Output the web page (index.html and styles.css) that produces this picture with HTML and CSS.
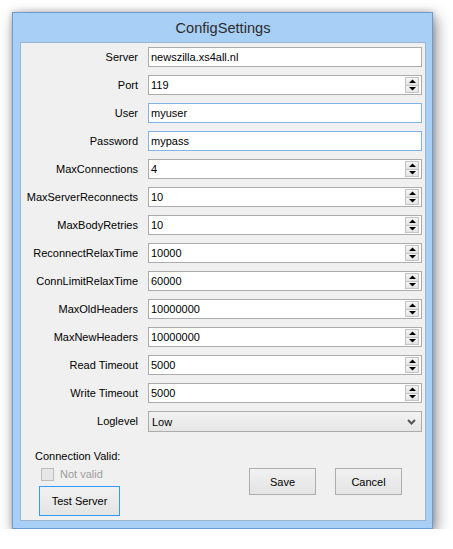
FILE: index.html
```html
<!DOCTYPE html>
<html>
<head>
<meta charset="utf-8">
<link rel="stylesheet" href="styles.css">
</head>
<body>
<div class="window">
  <div class="titlebar">ConfigSettings</div>
  <div class="client">
    <div class="form">
      <label class="lbl">Server</label>
      <div class="field"><span class="val">newszilla.xs4all.nl</span></div>

      <label class="lbl">Port</label>
      <div class="field spin"><span class="val">119</span><span class="spinner"><span class="sb up"><svg width="7" height="5" viewBox="0 0 7 5"><path d="M3.5 0.5 L7 4 L0 4 Z" fill="#000"/></svg></span><span class="sb down"><svg width="7" height="5" viewBox="0 0 7 5"><path d="M0 1 L7 1 L3.5 4.5 Z" fill="#000"/></svg></span></span></div>

      <label class="lbl">User</label>
      <div class="field focus"><span class="val">myuser</span></div>

      <label class="lbl">Password</label>
      <div class="field focus"><span class="val">mypass</span></div>

      <label class="lbl">MaxConnections</label>
      <div class="field spin"><span class="val">4</span><span class="spinner"><span class="sb up"><svg width="7" height="5" viewBox="0 0 7 5"><path d="M3.5 0.5 L7 4 L0 4 Z" fill="#000"/></svg></span><span class="sb down"><svg width="7" height="5" viewBox="0 0 7 5"><path d="M0 1 L7 1 L3.5 4.5 Z" fill="#000"/></svg></span></span></div>

      <label class="lbl">MaxServerReconnects</label>
      <div class="field spin"><span class="val">10</span><span class="spinner"><span class="sb up"><svg width="7" height="5" viewBox="0 0 7 5"><path d="M3.5 0.5 L7 4 L0 4 Z" fill="#000"/></svg></span><span class="sb down"><svg width="7" height="5" viewBox="0 0 7 5"><path d="M0 1 L7 1 L3.5 4.5 Z" fill="#000"/></svg></span></span></div>

      <label class="lbl">MaxBodyRetries</label>
      <div class="field spin"><span class="val">10</span><span class="spinner"><span class="sb up"><svg width="7" height="5" viewBox="0 0 7 5"><path d="M3.5 0.5 L7 4 L0 4 Z" fill="#000"/></svg></span><span class="sb down"><svg width="7" height="5" viewBox="0 0 7 5"><path d="M0 1 L7 1 L3.5 4.5 Z" fill="#000"/></svg></span></span></div>

      <label class="lbl">ReconnectRelaxTime</label>
      <div class="field spin"><span class="val">10000</span><span class="spinner"><span class="sb up"><svg width="7" height="5" viewBox="0 0 7 5"><path d="M3.5 0.5 L7 4 L0 4 Z" fill="#000"/></svg></span><span class="sb down"><svg width="7" height="5" viewBox="0 0 7 5"><path d="M0 1 L7 1 L3.5 4.5 Z" fill="#000"/></svg></span></span></div>

      <label class="lbl">ConnLimitRelaxTime</label>
      <div class="field spin"><span class="val">60000</span><span class="spinner"><span class="sb up"><svg width="7" height="5" viewBox="0 0 7 5"><path d="M3.5 0.5 L7 4 L0 4 Z" fill="#000"/></svg></span><span class="sb down"><svg width="7" height="5" viewBox="0 0 7 5"><path d="M0 1 L7 1 L3.5 4.5 Z" fill="#000"/></svg></span></span></div>

      <label class="lbl">MaxOldHeaders</label>
      <div class="field spin"><span class="val">10000000</span><span class="spinner"><span class="sb up"><svg width="7" height="5" viewBox="0 0 7 5"><path d="M3.5 0.5 L7 4 L0 4 Z" fill="#000"/></svg></span><span class="sb down"><svg width="7" height="5" viewBox="0 0 7 5"><path d="M0 1 L7 1 L3.5 4.5 Z" fill="#000"/></svg></span></span></div>

      <label class="lbl">MaxNewHeaders</label>
      <div class="field spin"><span class="val">10000000</span><span class="spinner"><span class="sb up"><svg width="7" height="5" viewBox="0 0 7 5"><path d="M3.5 0.5 L7 4 L0 4 Z" fill="#000"/></svg></span><span class="sb down"><svg width="7" height="5" viewBox="0 0 7 5"><path d="M0 1 L7 1 L3.5 4.5 Z" fill="#000"/></svg></span></span></div>

      <label class="lbl">Read Timeout</label>
      <div class="field spin"><span class="val">5000</span><span class="spinner"><span class="sb up"><svg width="7" height="5" viewBox="0 0 7 5"><path d="M3.5 0.5 L7 4 L0 4 Z" fill="#000"/></svg></span><span class="sb down"><svg width="7" height="5" viewBox="0 0 7 5"><path d="M0 1 L7 1 L3.5 4.5 Z" fill="#000"/></svg></span></span></div>

      <label class="lbl">Write Timeout</label>
      <div class="field spin"><span class="val">5000</span><span class="spinner"><span class="sb up"><svg width="7" height="5" viewBox="0 0 7 5"><path d="M3.5 0.5 L7 4 L0 4 Z" fill="#000"/></svg></span><span class="sb down"><svg width="7" height="5" viewBox="0 0 7 5"><path d="M0 1 L7 1 L3.5 4.5 Z" fill="#000"/></svg></span></span></div>

      <label class="lbl">Loglevel</label>
      <div class="combo"><span class="val">Low</span><svg class="chev" width="9" height="6" viewBox="0 0 9 6"><path d="M1 1 L4.5 4.5 L8 1" fill="none" stroke="#555" stroke-width="2"/></svg></div>
    </div>

    <div class="bottom">
      <div class="status">
        <div class="status-label">Connection Valid:</div>
        <div class="check-row"><span class="checkbox"></span><span class="check-text">Not valid</span></div>
        <button class="btn default">Test Server</button>
      </div>
      <div class="actions">
        <button class="btn">Save</button>
        <button class="btn">Cancel</button>
      </div>
    </div>
  </div>
</div>
</body>
</html>
```

FILE: styles.css
```css
html, body {
  margin: 0;
  padding: 0;
  background: #ffffff;
}
body {
  font-family: "Liberation Sans", Arial, sans-serif;
  font-size: 11px;
  color: #000;
  padding: 12px 0 0 12px;
}
.window {
  box-sizing: border-box;
  width: 421px;
  height: 517px;
  border: 1px solid #6f9ad0;
  background: #a8cff6;
  box-shadow: 3px 5px 14px rgba(0, 0, 0, 0.45), 0 0 6px rgba(0, 0, 0, 0.2);
  display: flex;
  flex-direction: column;
  padding: 0 6px 7px 7px;
}
.titlebar {
  height: 29px;
  line-height: 30px;
  text-align: center;
  font-size: 14.6px;
  color: #2b2b2b;
}
.client {
  flex: 1;
  border: 1px solid #9db4cf;
  background: #f0f0f0;
  display: flex;
  flex-direction: column;
  padding: 4px 3px 4px 0;
}
.form {
  display: grid;
  grid-template-columns: 117px 274px;
  column-gap: 10px;
  row-gap: 8px;
  grid-auto-rows: 20px;
}
.lbl {
  text-align: right;
  line-height: 20px;
  white-space: nowrap;
  color: #000;
}
.field {
  height: 20px;
  box-sizing: border-box;
  border: 1px solid #acacac;
  background: #fff;
  display: flex;
  align-items: center;
  position: relative;
}
.field.focus {
  border-color: #7eb4ea;
}
.val {
  padding-left: 2px;
  line-height: 18px;
}
.spinner {
  position: absolute;
  right: 2px;
  top: 1px;
  width: 14px;
  height: 16px;
  display: flex;
  flex-direction: column;
}
.sb {
  flex: 1;
  box-sizing: border-box;
  border: 1px solid #c4c4c4;
  background: linear-gradient(#f4f4f4, #e4e4e4);
  display: flex;
  align-items: center;
  justify-content: center;
}
.sb.down {
  border-top: none;
}
.sb svg {
  display: block;
}
.combo {
  height: 21px;
  box-sizing: border-box;
  border: 1px solid #acacac;
  background: linear-gradient(#f2f2f2, #e6e6e6);
  display: flex;
  align-items: center;
  justify-content: space-between;
  padding-right: 5px;
}
.combo .val {
  padding-left: 3px;
}
.chev {
  display: block;
}
.bottom {
  display: flex;
  flex: 1;
}
.status {
  padding-left: 14px;
  padding-top: 18px;
  display: flex;
  flex-direction: column;
  align-items: flex-start;
}
.status-label {
  line-height: 14px;
}
.check-row {
  display: flex;
  align-items: center;
  height: 14px;
  margin-top: 4px;
  margin-left: 6px;
}
.checkbox {
  width: 11px;
  height: 11px;
  border: 1px solid #bcbcbc;
  background: #e6e6e6;
}
.check-text {
  color: #9d9d9d;
  margin-left: 6px;
}
.btn {
  font-family: "Liberation Sans", Arial, sans-serif;
  font-size: 11px;
  color: #000;
  border: 1px solid #adadad;
  background: linear-gradient(#f1f1f1, #e4e4e4);
  padding: 0;
  margin: 0;
  box-sizing: border-box;
  width: 67px;
  height: 27px;
}
.btn.default {
  border-color: #3399ff;
  width: 81px;
  height: 30px;
  margin-top: 5px;
  margin-left: 4px;
}
.actions {
  margin-left: auto;
  margin-right: 20px;
  margin-top: 37px;
  display: flex;
  gap: 19px;
  align-items: flex-start;
}
```
